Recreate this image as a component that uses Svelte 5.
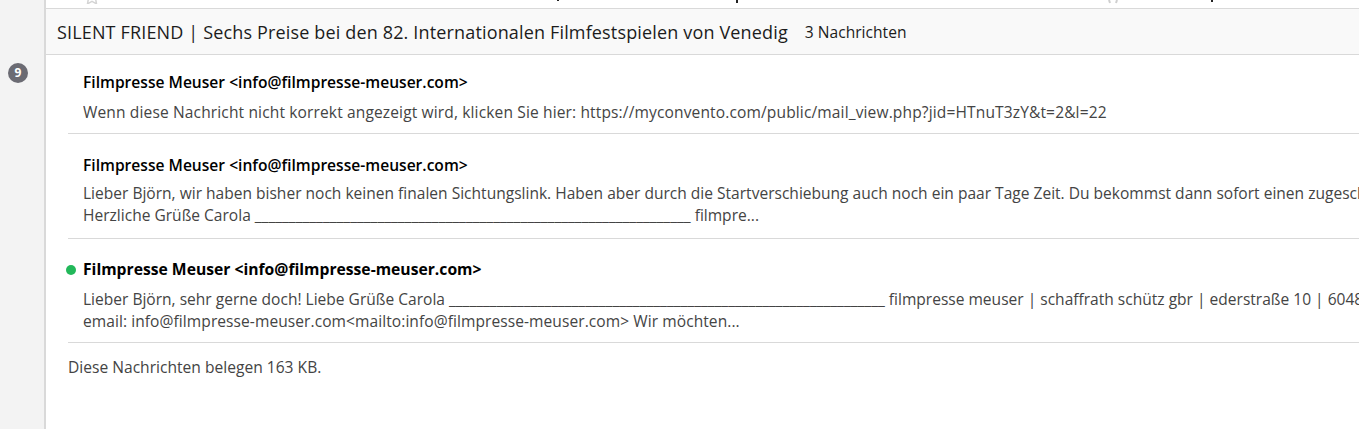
<script>
  const rule = '_'.repeat(64);

  const messages = [
    {
      from: 'Filmpresse Meuser <info@filmpresse-meuser.com>',
      lines: ['Wenn diese Nachricht nicht korrekt angezeigt wird, klicken Sie hier: https://myconvento.com/public/mail_view.php?jid=HTnuT3zY&t=2&l=22'],
      unread: false
    },
    {
      from: 'Filmpresse Meuser <info@filmpresse-meuser.com>',
      lines: [
        'Lieber Björn, wir haben bisher noch keinen finalen Sichtungslink. Haben aber durch die Startverschiebung auch noch ein paar Tage Zeit. Du bekommst dann sofort einen zugeschickt.',
        'Herzliche Grüße Carola ' + rule + ' filmpre...'
      ],
      unread: false
    },
    {
      from: 'Filmpresse Meuser <info@filmpresse-meuser.com>',
      lines: [
        'Lieber Björn, sehr gerne doch! Liebe Grüße Carola ' + rule + ' filmpresse meuser | schaffrath schütz gbr | ederstraße 10 | 60486 frankfurt',
        'email: info@filmpresse-meuser.com<mailto:info@filmpresse-meuser.com> Wir möchten...'
      ],
      unread: true
    }
  ];
</script>

<div class="page">
  <aside class="rail">
    <span class="count">9</span>
  </aside>
  <main class="content">
    <div class="prev-row">
      <svg class="star" width="16" height="4" viewBox="0 11 16 4">
        <path d="M8 1l2.200 4.600 5 .7-3.600 3.500.9 5L8 12.400l-4.500 2.400.9-5L.8 6.300l5-.7z" fill="none" stroke="#d4d4d4" stroke-width="1.500"/>
      </svg>
      <span class="tail t1"></span>
      <span class="tail t2"></span>
      <span class="tail t3"></span>
      <svg class="clip-icon" width="12" height="4" viewBox="0 0 12 4">
        <path d="M2 0l1 3M10 0L9 3" fill="none" stroke="#cfcfcf" stroke-width="2"/>
      </svg>
    </div>
    <header class="thread-head">
      <span class="subject">SILENT FRIEND | Sechs Preise bei den 82. Internationalen Filmfestspielen von Venedig</span>
      <span class="msg-count">3 Nachrichten</span>
    </header>
    <div class="thread">
      {#each messages as m}
        <article class="msg" class:unread={m.unread}>
          <div class="from">
            {#if m.unread}<span class="dot"></span>{/if}
            {m.from}
          </div>
          <div class="body">
            {#each m.lines as line}
              <div class="line">{line}</div>
            {/each}
          </div>
        </article>
      {/each}
      <p class="size">Diese Nachrichten belegen 163 KB.</p>
    </div>
  </main>
</div>

<style>
  :global(body) {
    margin: 0;
    background: #fff;
    overflow: hidden;
  }

  .page {
    display: flex;
    height: 429px;
    font-family: "Open Sans", "Noto Sans", sans-serif;
    overflow: hidden;
  }

  .rail {
    width: 44px;
    flex: none;
    background: #f3f3f3;
    border-right: 2px solid #d9d9d9;
    position: relative;
  }

  .count {
    position: absolute;
    left: 8px;
    top: 63px;
    width: 20px;
    height: 20px;
    border-radius: 50%;
    background: #6b6b73;
    color: #fff;
    font-size: 12px;
    font-weight: 700;
    line-height: 20px;
    text-align: center;
  }

  .content {
    flex: 1;
    min-width: 0;
  }

  .prev-row {
    height: 8px;
    border-bottom: 1px solid #d9d9d9;
    padding-left: 38px;
    overflow: hidden;
    position: relative;
  }

  .star {
    display: block;
  }

  .tail {
    position: absolute;
    top: 0;
    width: 2px;
    background: #222;
  }

  .t1 { left: 511px; height: 1px; }
  .t2 { left: 690px; height: 3px; }
  .t3 { left: 1165px; height: 2px; }

  .clip-icon {
    position: absolute;
    left: 1061px;
    top: 0;
  }

  .thread-head {
    height: 46px;
    box-sizing: border-box;
    background: #f9f9f9;
    border-bottom: 1px solid #d9d9d9;
    display: flex;
    align-items: center;
    padding: 1px 0 0 11px;
    white-space: nowrap;
    color: #1c1c1c;
  }

  .subject {
    font-size: 18px;
    letter-spacing: 0.155px;
  }

  .msg-count {
    font-size: 15.6px;
    margin-left: 17px;
  }

  .thread {
    padding-left: 22px;
  }

  .msg {
    border-bottom: 1px solid #d9d9d9;
    padding: 17px 0 10px 15px;
    white-space: nowrap;
  }

  .msg + .msg {
    padding-top: 21px;
    padding-bottom: 12px;
  }

  .msg + .msg.unread {
    padding-top: 20px;
    padding-bottom: 10px;
  }

  .from {
    font-size: 15.6px;
    font-weight: 600;
    color: #000;
    line-height: 20px;
    position: relative;
  }

  .unread .from {
    font-size: 15.7px;
    font-weight: 700;
  }

  .dot {
    position: absolute;
    left: -17px;
    top: 6px;
    width: 10px;
    height: 10px;
    border-radius: 50%;
    background: #22b85a;
  }

  .body {
    margin-top: 9px;
    font-size: 15.55px;
    line-height: 22px;
    color: #444;
    overflow: hidden;
  }

  .msg:first-child .line {
    letter-spacing: 0.13px;
  }

  .msg + .msg .body {
    margin-top: 7px;
  }

  .msg + .msg.unread .body {
    margin-top: 9px;
  }

  .unread .line:last-child {
    letter-spacing: 0.07px;
  }

  .size {
    margin: 14px 0 0;
    font-size: 15.6px;
    line-height: 20px;
    color: #444;
  }
</style>
